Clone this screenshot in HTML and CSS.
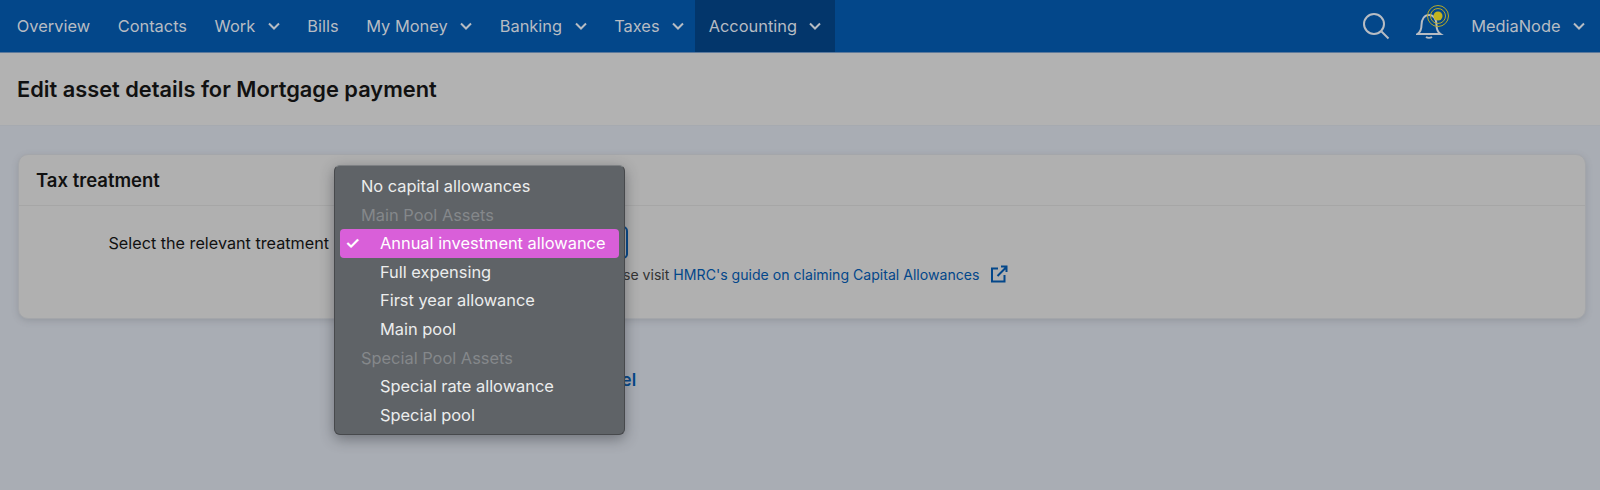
FILE: index.html
```html
<!DOCTYPE html>
<html>

<head>
  <link rel="stylesheet" href="styles.css">
</head>

<body>
  <nav class="topnav">
    <a class="nav-item">Overview</a>
    <a class="nav-item">Contacts</a>
    <a class="nav-item">Work <svg class="chev" viewBox="0 0 12 8"><path d="M1 1.5l5 5 5-5" /></svg></a>
    <a class="nav-item">Bills</a>
    <a class="nav-item">My Money <svg class="chev" viewBox="0 0 12 8"><path d="M1 1.5l5 5 5-5" /></svg></a>
    <a class="nav-item">Banking <svg class="chev" viewBox="0 0 12 8"><path d="M1 1.5l5 5 5-5" /></svg></a>
    <a class="nav-item">Taxes <svg class="chev" viewBox="0 0 12 8"><path d="M1 1.5l5 5 5-5" /></svg></a>
    <a class="nav-item active">Accounting <svg class="chev" viewBox="0 0 12 8"><path d="M1 1.5l5 5 5-5" /></svg></a>
    <div class="nav-right">
      <svg class="search" viewBox="0 0 28 28">
        <circle cx="12" cy="12" r="10" />
        <path d="M19.500 19.500l7 7" />
      </svg>
      <svg class="bell" viewBox="0 0 36 36">
        <path class="bell-body" d="M1.500 30c3-2 4-4 4-9 0-6 3-10 7.500-10 4.500 0 7.500 4 7.500 10 0 5 1 7 4 9z" />
        <path class="bell-body" d="M10 33c1.500 1 4.500 1 6 0" />
        <circle class="ring" cx="22" cy="12" r="7.500" />
        <circle class="ring" cx="22" cy="12" r="10.500" />
        <circle class="dot" cx="22" cy="12" r="4.500" />
      </svg>
      <a class="nav-item user">MediaNode <svg class="chev" viewBox="0 0 12 8"><path d="M1 1.5l5 5 5-5" /></svg></a>
    </div>
  </nav>

  <header class="page-head">
    <h1>Edit asset details for Mortgage payment</h1>
  </header>

  <main class="page-body">
    <section class="card">
      <h2 class="card-title">Tax treatment</h2>
      <div class="card-body">
        <label class="field-label">Select the relevant treatment</label>
        <div class="field">
          <div class="select-box"></div>
          <p class="help">To find out which treatment applies, please visit <a>HMRC's guide on claiming Capital Allowances</a>
            <svg class="ext" viewBox="0 0 18 18">
              <path d="M8 3.500H2v13h12.500V10M7.500 11L16.500 2M11 1.500h5.500V7" />
            </svg>
          </p>
        </div>
      </div>
    </section>

    <div class="actions">
      <button class="save">Save</button>
      <a class="cancel">Cancel</a>
    </div>
  </main>

  <ul class="menu">
    <li>No capital allowances</li>
    <li class="group">Main Pool Assets</li>
    <li class="sub picked"><span class="tick">✓</span>Annual investment allowance</li>
    <li class="sub">Full expensing</li>
    <li class="sub">First year allowance</li>
    <li class="sub">Main pool</li>
    <li class="group">Special Pool Assets</li>
    <li class="sub">Special rate allowance</li>
    <li class="sub">Special pool</li>
  </ul>
</body>

</html>
```

FILE: styles.css
```css
* {
  box-sizing: border-box;
}

body {
  margin: 0;
  height: 490px;
  overflow: hidden;
  background-color: #a9adb4;
  font-family: Inter, "Noto Sans", sans-serif;
  color: #111;
}

.topnav {
  display: flex;
  align-items: stretch;
  height: 53px;
  padding-left: 3px;
  background-color: #03478a;
  border-bottom: 1px solid #5d7a9c;
}

.nav-item {
  display: flex;
  align-items: center;
  gap: 12.500px;
  padding: 0 13.800px;
  font-size: 16.400px;
  color: #b7bcc3;
}

.nav-item.active {
  margin-left: -3px;
  background-color: #03366b;
}

.chev {
  width: 12px;
  height: 8px;
  fill: none;
  stroke: #b7bcc3;
  stroke-width: 2;
}

.nav-right {
  display: flex;
  align-items: center;
  margin-left: auto;
}

.search {
  width: 28px;
  height: 28px;
  margin-right: 26px;
  fill: none;
  stroke: #b7bcc3;
  stroke-width: 2;
}

.bell {
  width: 36px;
  height: 36px;
  margin-top: -8px;
  margin-right: 5px;
}

.bell-body {
  fill: none;
  stroke: #b7bcc3;
  stroke-width: 2;
}

.ring {
  fill: none;
  stroke: #b5a92a;
  stroke-width: 1;
}

.dot {
  fill: #c2b41f;
}

.user {
  padding-right: 15px;
}

.page-head {
  display: flex;
  align-items: center;
  height: 73px;
  padding-left: 17px;
  background-color: #b2b2b2;
  border-bottom: 1px solid #a6aab0;
}

h1 {
  margin: 0;
  font-size: 21.800px;
  font-weight: 600;
}

.page-body {
  padding: 28px 14px 0 18px;
}

.card {
  height: 165px;
  background-color: #b0b0b0;
  border: 1px solid #a4a6aa;
  border-radius: 10px;
  box-shadow: 0 2px 6px rgba(90, 95, 105, 0.25);
}

.card-title {
  margin: 0;
  height: 51px;
  padding: 14px 17px 0;
  font-size: 18.500px;
  font-weight: 600;
  border-bottom: 1px solid #a6a6a6;
}

.card-body {
  display: flex;
  padding-top: 20px;
}

.field-label {
  width: 310px;
  padding-top: 7px;
  text-align: right;
  font-size: 16.200px;
  white-space: nowrap;
}

.field {
  margin-left: 11px;
}

.select-box {
  width: 288px;
  height: 33px;
  border: 2px solid #03478a;
  border-radius: 5px;
}

.help {
  display: flex;
  align-items: center;
  margin: 6px 0 0;
  padding-left: 12px;
  font-size: 14.100px;
  color: #333;
  white-space: pre;
}

.help a {
  color: #03478a;
}

.ext {
  width: 18px;
  height: 18px;
  margin-left: 11px;
  fill: none;
  stroke: #03478a;
  stroke-width: 2;
}

.actions {
  display: flex;
  align-items: center;
  gap: 20px;
  margin-top: 43px;
  padding-left: 321px;
}

.save {
  width: 220px;
  height: 36px;
  border: 0;
  background-color: #03478a;
}

.cancel {
  font-size: 17px;
  font-weight: 600;
  color: #03478a;
}

/* native dropdown, lies over the form */
.menu {
  position: absolute;
  top: 165px;
  left: 334px;
  width: 291px;
  height: 270px;
  margin: 0;
  padding: 6px 5px;
  list-style: none;
  background-color: #5f6367;
  border: 1px solid #47494c;
  border-top-color: #7d8083;
  border-radius: 6px;
  box-shadow: 0 4px 14px rgba(40, 42, 48, 0.45);
  font-size: 16.400px;
  color: #eceded;
}

.menu li {
  position: relative;
  height: 28.600px;
  padding: 0 0 0 21px;
  line-height: 28px;
  white-space: nowrap;
}

.menu .group {
  color: #85888b;
}

.menu .sub {
  padding-left: 40px;
}

.menu .picked {
  background-color: #d95fd9;
  border-radius: 4px;
  color: #fff;
}

.tick {
  position: absolute;
  left: 5px;
  font-size: 17px;
  font-weight: 600;
}
```
